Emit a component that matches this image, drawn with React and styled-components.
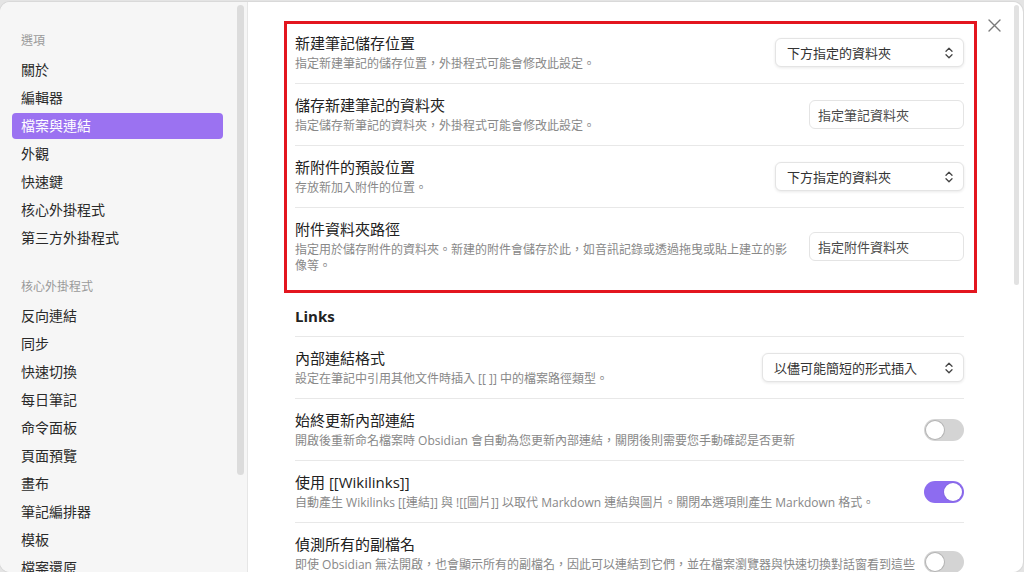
import React from "react";
import styled, { createGlobalStyle } from "styled-components";

const GlobalStyle = createGlobalStyle`
  * { box-sizing: border-box; }
  html, body {
    margin: 0;
    height: 572px;
    overflow: hidden;
    background: #e4e4e4;
    font-family: "Open Sans", "Noto Sans CJK TC", sans-serif;
    color: #222;
  }
`;

const sidebarGroups = [
  {
    title: "選項",
    items: ["關於", "編輯器", "檔案與連結", "外觀", "快速鍵", "核心外掛程式", "第三方外掛程式"],
  },
  {
    title: "核心外掛程式",
    items: ["反向連結", "同步", "快速切換", "每日筆記", "命令面板", "頁面預覽", "畫布", "筆記編排器", "模板", "檔案還原"],
  },
];

const fileSettings = [
  {
    title: "新建筆記儲存位置",
    desc: "指定新建筆記的儲存位置，外掛程式可能會修改此設定。",
    control: { type: "select", value: "下方指定的資料夾", width: 189 },
  },
  {
    title: "儲存新建筆記的資料夾",
    desc: "指定儲存新筆記的資料夾，外掛程式可能會修改此設定。",
    control: { type: "input", value: "指定筆記資料夾" },
  },
  {
    title: "新附件的預設位置",
    desc: "存放新加入附件的位置。",
    control: { type: "select", value: "下方指定的資料夾", width: 189 },
  },
  {
    title: "附件資料夾路徑",
    desc: "指定用於儲存附件的資料夾。新建的附件會儲存於此，如音訊記錄或透過拖曳或貼上建立的影像等。",
    control: { type: "input", value: "指定附件資料夾" },
  },
];

const linkSettings = [
  {
    title: "內部連結格式",
    desc: "設定在筆記中引用其他文件時插入 [[ ]] 中的檔案路徑類型。",
    control: { type: "select", value: "以儘可能簡短的形式插入", width: 202 },
  },
  {
    title: "始終更新內部連結",
    desc: "開啟後重新命名檔案時 Obsidian 會自動為您更新內部連結，關閉後則需要您手動確認是否更新",
    control: { type: "toggle", on: false },
  },
  {
    title: "使用 [[Wikilinks]]",
    desc: "自動產生 Wikilinks [[連結]] 與 ![[圖片]] 以取代 Markdown 連結與圖片。關閉本選項則產生 Markdown 格式。",
    control: { type: "toggle", on: true },
  },
  {
    title: "偵測所有的副檔名",
    desc: "即使 Obsidian 無法開啟，也會顯示所有的副檔名，因此可以連結到它們，並在檔案瀏覽器與快速切換對話窗看到這些檔案。",
    control: { type: "toggle", on: false },
  },
];

const Chevrons = () => (
  <svg width="8" height="12" viewBox="0 0 8 12" fill="none">
    <path d="M1 4.2 L4 1.3 L7 4.2" stroke="#444" strokeWidth="1.3" strokeLinecap="round" strokeLinejoin="round" />
    <path d="M1 7.8 L4 10.7 L7 7.8" stroke="#444" strokeWidth="1.3" strokeLinecap="round" strokeLinejoin="round" />
  </svg>
);

const Control = ({ control }) => {
  if (control.type === "select") {
    return (
      <Select $width={control.width}>
        <span>{control.value}</span>
        <Chevrons />
      </Select>
    );
  }
  if (control.type === "input") {
    return <TextInput placeholder={control.value} />;
  }
  return (
    <Toggle $on={control.on}>
      <Knob $on={control.on} />
    </Toggle>
  );
};

const SettingRow = ({ item }) => (
  <Row>
    <Info>
      <Title>{item.title}</Title>
      <Desc>{item.desc}</Desc>
    </Info>
    <Control control={item.control} />
  </Row>
);

const App = () => {
  return (
    <>
      <GlobalStyle />
      <Modal>
        <Sidebar>
          {sidebarGroups.map((group) => (
            <Group key={group.title}>
              <GroupTitle>{group.title}</GroupTitle>
              {group.items.map((item) => (
                <NavItem key={item} $active={item === "檔案與連結"}>
                  {item}
                </NavItem>
              ))}
            </Group>
          ))}
          <SideThumb />
        </Sidebar>
        <Main>
          <CloseButton>
            <svg width="13" height="13" viewBox="0 0 13 13">
              <path d="M1 1 L12 12 M12 1 L1 12" stroke="#7a7a7a" strokeWidth="1.4" strokeLinecap="round" />
            </svg>
          </CloseButton>
          <Content>
            <Highlight>
              {fileSettings.map((item) => (
                <SettingRow key={item.title} item={item} />
              ))}
            </Highlight>
            <Heading>Links</Heading>
            {linkSettings.map((item) => (
              <SettingRow key={item.title} item={item} />
            ))}
          </Content>
          <MainThumb />
        </Main>
      </Modal>
    </>
  );
};
export default App;

const Modal = styled.div`
  display: flex;
  height: 570px;
  width: 1023px;
  margin-top: 2px;
  background: #ffffff;
  border-radius: 10px;
  box-shadow: 0 0 0 1px #d9d9d9;
  overflow: hidden;
`;

const Sidebar = styled.div`
  position: relative;
  width: 248px;
  flex: none;
  background: #f6f6f6;
  border-right: 1px solid #e6e6e6;
  padding: 29px 0 0 12px;
  overflow: hidden;
`;

const Group = styled.div`
  width: 211px;
  margin-bottom: 26px;
`;

const GroupTitle = styled.div`
  font-size: 12px;
  line-height: 20px;
  color: #9a9a9a;
  padding-left: 9px;
  margin-bottom: 6px;
`;

const NavItem = styled.div`
  height: 26px;
  line-height: 26px;
  padding-left: 9px;
  margin-bottom: 2px;
  font-size: 14px;
  border-radius: 4px;
  color: ${(p) => (p.$active ? "#ffffff" : "#2a2a2a")};
  background: ${(p) => (p.$active ? "#9b72f1" : "transparent")};
`;

const SideThumb = styled.div`
  position: absolute;
  top: 3px;
  right: 3px;
  width: 7px;
  height: 470px;
  border-radius: 4px;
  background: #dcdcdc;
`;

const Main = styled.div`
  position: relative;
  flex: 1;
  padding: 19px 0 0 47px;
  overflow: hidden;
`;

const MainThumb = styled.div`
  position: absolute;
  top: 3px;
  right: 4px;
  width: 5px;
  height: 280px;
  border-radius: 3px;
  background: #e2e2e2;
`;

const CloseButton = styled.div`
  position: absolute;
  top: 11px;
  right: 17px;
  width: 24px;
  height: 24px;
  display: flex;
  align-items: center;
  justify-content: center;
`;

const Content = styled.div`
  width: 669px;
`;

const Highlight = styled.div`
  margin: 0 -13px 0 -11px;
  border: 3px solid #e3161f;
  padding: 0 10px 5px 8px;
`;

const Row = styled.div`
  display: flex;
  align-items: center;
  padding: 11px 0;
  border-top: 1px solid #e8e8e8;

  ${Highlight} > &:first-child {
    border-top: none;
    padding-top: 9px;
  }
`;

const Info = styled.div`
  flex: 1;
  min-width: 0;
  margin-right: 6px;
`;

const Title = styled.div`
  font-size: 15px;
  line-height: 20px;
  color: #222;
`;

const Desc = styled.div`
  font-size: 12px;
  line-height: 16px;
  margin-top: 3px;
  color: #888;
`;

const Heading = styled.div`
  padding: 13px 0 10px;
  font-size: 15px;
  font-weight: 700;
  line-height: 20px;
  color: #222;
`;

const Select = styled.div`
  flex: none;
  width: ${(p) => p.$width}px;
  height: 29px;
  padding: 0 10px 0 11px;
  display: flex;
  align-items: center;
  justify-content: space-between;
  font-size: 13px;
  color: #333;
  background: #ffffff;
  border: 1px solid #e4e4e4;
  border-radius: 6px;
  box-shadow: 0 1px 3px rgba(0, 0, 0, 0.09);
`;

const TextInput = styled.input`
  flex: none;
  width: 155px;
  height: 29px;
  margin-left: 6px;
  padding: 0 8px;
  font-family: inherit;
  font-size: 13px;
  color: #333;
  background: #ffffff;
  border: 1px solid #e4e4e4;
  border-radius: 6px;
  outline: none;

  &::placeholder {
    color: #4a4a4a;
  }
`;

const Toggle = styled.div`
  position: relative;
  flex: none;
  width: 40px;
  height: 22px;
  border-radius: 11px;
  background: ${(p) => (p.$on ? "#8d6cf0" : "#d4d4d4")};
`;

const Knob = styled.div`
  position: absolute;
  top: 2px;
  left: ${(p) => (p.$on ? "20px" : "2px")};
  width: 18px;
  height: 18px;
  border-radius: 50%;
  background: #ffffff;
  box-shadow: 0 0 0 1px rgba(0, 0, 0, ${(p) => (p.$on ? "0.05" : "0.15")});
`;
